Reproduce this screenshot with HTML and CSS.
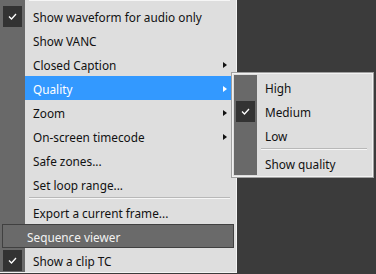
FILE: index.html
```html
<!DOCTYPE html>
<html lang="en">
<head>
    <meta charset="UTF-8">
    <title>Viewer context menu</title>
    <link rel="stylesheet" href="styles.css">
</head>
<body>
    <div class="menu">
        <div class="sep sep-top"></div>
        <div class="item">
            <span class="gutter"><span class="check"><svg width="9" height="7" viewBox="0 0 9 7"><polyline points="1,3.5 3.5,6 8,1" fill="none" stroke="#fff" stroke-width="1.3"/></svg></span></span>
            <span class="label">Show waveform for audio only</span>
        </div>
        <div class="item"><span class="gutter"></span><span class="label">Show VANC</span></div>
        <div class="item"><span class="gutter"></span><span class="label">Closed Caption<span class="arrow"></span></span></div>
        <div class="item active"><span class="gutter"></span><span class="label">Quality<span class="arrow"></span></span></div>
        <div class="item"><span class="gutter"></span><span class="label">Zoom<span class="arrow"></span></span></div>
        <div class="item"><span class="gutter"></span><span class="label">On-screen timecode<span class="arrow"></span></span></div>
        <div class="item"><span class="gutter"></span><span class="label">Safe zones...</span></div>
        <div class="item"><span class="gutter"></span><span class="label">Set loop range...</span></div>
        <div class="sep"></div>
        <div class="item"><span class="gutter"></span><span class="label">Export a current frame...</span></div>
        <div class="header">Sequence viewer</div>
        <div class="item">
            <span class="gutter"><span class="check"><svg width="9" height="7" viewBox="0 0 9 7"><polyline points="1,3.5 3.5,6 8,1" fill="none" stroke="#fff" stroke-width="1.3"/></svg></span></span>
            <span class="label">Show a clip TC</span>
        </div>
    </div>

    <div class="submenu">
        <div class="list">
            <div class="item"><span class="gutter"></span><span class="label">High</span></div>
            <div class="item">
                <span class="gutter"><span class="check"><svg width="9" height="7" viewBox="0 0 9 7"><polyline points="1,3.5 3.5,6 8,1" fill="none" stroke="#fff" stroke-width="1.3"/></svg></span></span>
                <span class="label">Medium</span>
            </div>
            <div class="item"><span class="gutter"></span><span class="label">Low</span></div>
            <div class="sep"></div>
            <div class="item"><span class="gutter"></span><span class="label">Show quality</span></div>
        </div>
    </div>
</body>
</html>
```

FILE: styles.css
```css
body {
    margin: 0;
    height: 274px;
    overflow: hidden;
    background-color: #3b3b3b;
    font-family: "Noto Sans", "Open Sans", sans-serif;
    font-size: 11.8px;
    color: #111;
}
.menu {
    width: 234px;
    margin-top: -1px;
    padding-right: 2px;
    background: linear-gradient(to right, #696969 25px, #dedede 25px);
    border-right: 1px solid #f3f3f3;
    border-bottom: 1px solid #f3f3f3;
}
.item {
    display: flex;
    align-items: center;
    height: 24px;
}
.gutter {
    width: 25px;
    height: 100%;
    flex-shrink: 0;
    display: flex;
    align-items: center;
    justify-content: center;
}
.check {
    width: 19px;
    height: 21px;
    background-color: #333;
    display: flex;
    align-items: center;
    justify-content: center;
}
.label {
    flex: 1;
    height: 100%;
    display: flex;
    align-items: center;
    padding-left: 8px;
    padding-top: 1px;
    box-sizing: border-box;
    white-space: nowrap;
}
.item.active .label {
    background-color: #3399ff;
    color: white;
}
.arrow {
    margin-left: auto;
    margin-right: 7px;
    width: 0;
    height: 0;
    border-top: 3.5px solid transparent;
    border-bottom: 3.5px solid transparent;
    border-left: 4px solid #111;
}
.item.active .arrow {
    border-left-color: white;
}
.sep {
    height: 4px;
    margin-left: 29px;
    margin-right: 4px;
    box-sizing: border-box;
    padding-top: 1px;
}
.sep::before {
    content: "";
    display: block;
    border-top: 1px solid #b8b8b8;
    border-bottom: 1px solid #f6f6f6;
}
.sep-top {
    height: 5px;
    padding-top: 0;
}
.header {
    height: 24px;
    width: 232px;
    margin-left: 2px;
    box-sizing: border-box;
    border: 1px solid #404040;
    background-color: #6a6a6a;
    color: #f2f2f2;
    padding-left: 24px;
    padding-top: 1px;
    display: flex;
    align-items: center;
}
.submenu {
    position: absolute;
    left: 231px;
    top: 72px;
    width: 137px;
    padding: 2px;
    border: 1px solid #a0a0a0;
    background-color: #dedede;
    box-shadow: inset 0 0 0 1px #f2f2f2;
}
.submenu .list {
    background: linear-gradient(to right, #696969 23px, transparent 23px);
}
.submenu .gutter {
    width: 23px;
}
.submenu .sep {
    margin-left: 27px;
}
```
